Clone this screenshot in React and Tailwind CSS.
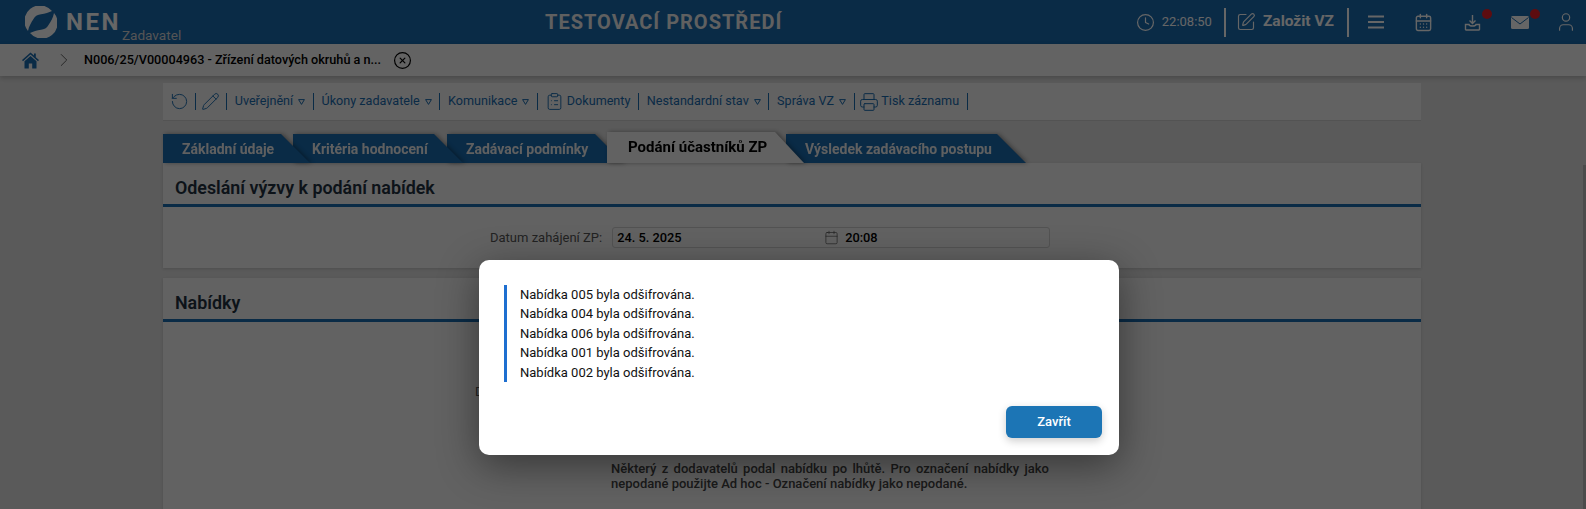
import { Clock, SquarePen, CalendarDays, User, RotateCcw, Pencil, ClipboardList, Printer, CircleX, Calendar, ChevronRight } from 'lucide-react';

const offers = ['005', '004', '006', '001', '002'];

function Sep() {
    return <span className="w-px h-[17px] bg-[#196baf]" />;
}

function Caret() {
    return (
        <svg width="7" height="6" viewBox="0 0 7 6" className="ml-[5px] mt-px">
            <path d="M0.6 0.6H6.4L3.5 5.4Z" fill="none" stroke="currentColor" strokeWidth="1" />
        </svg>
    );
}

function ToolItem({ label, caret, icon, gapClass }) {
    return (
        <>
            <span className={`flex items-center ${gapClass}`}>
                {icon}
                {label && <span>{label}</span>}
                {caret && <Caret />}
            </span>
            <Sep />
        </>
    );
}

function Tab({ label, wrapClass, widthClass, active }) {
    return (
        <div className={`relative ${wrapClass} drop-shadow-[2px_0_2px_rgba(0,0,0,0.35)]`}>
            <div className={`${widthClass} [clip-path:polygon(0_0,calc(100%-29px)_0,100%_100%,0_100%)] flex items-center font-bold ${active ? 'h-[31px] pl-[21px] text-[15px] bg-[#f5f5f5] text-black' : 'h-[29px] pl-[19px] pt-px text-[14px] bg-[#196baf] text-[#f0f0f0]'}`}>
                {label}
            </div>
        </div>
    );
}

function SectionTitle({ children }) {
    return (
        <div className="h-[44px] pl-3 pt-[9px] flex items-center border-b-[3px] border-[#196baf] text-[17.85px] font-semibold text-[#22313f]">
            {children}
        </div>
    );
}

function Logo() {
    return (
        <svg width="32" height="32" viewBox="0 0 32 32" fill="#ffffff">
            <path d="M27 5A15.5 15.5 0 0 0 3 25C4 20 6 17 8.5 13C10 10 13 8.5 16 8.3C20 8 24 6.5 27 5Z" />
            <path d="M5 27A15.5 15.5 0 0 0 29 7C28 12 26 15 23.5 19C22 22 19 23.5 16 23.7C12 24 8 25.5 5 27Z" />
        </svg>
    );
}

export default function App() {
    return (
        <div className="relative h-[509px] w-[1586px] overflow-hidden bg-[#e1e1e1] font-[Roboto,sans-serif]">
            {/* Header */}
            <div className="h-[44px] bg-[#196baf] flex items-center text-white">
                <div className="w-[545px] pl-[25px] flex items-center">
                    <Logo />
                    <span className="ml-[9px] text-[24px] font-bold tracking-[2.5px] leading-none">NEN</span>
                    <span className="ml-[1px] mt-[27px] text-[13.6px] leading-none text-[#d5d5d5]">Zadavatel</span>
                </div>
                <div className="text-[20px] font-bold tracking-[1px] text-[#f0f0f0]">TESTOVACÍ PROSTŘEDÍ</div>
                <div className="ml-auto flex items-center">
                    <Clock size={19} strokeWidth={1.5} />
                    <span className="ml-[7px] text-[13px]">22:08:50</span>
                    <span className="ml-[12px] w-[2px] h-[29px] bg-white" />
                    <SquarePen size={20} strokeWidth={1.4} className="ml-[10px]" />
                    <span className="ml-[7px] text-[15.5px] font-bold">Založit VZ</span>
                    <span className="ml-[13px] w-[2px] h-[29px] bg-white" />
                    <svg width="16" height="14" viewBox="0 0 16 14" className="ml-[19px]">
                        <path d="M0 1.5H16M0 7H16M0 12.5H16" stroke="white" strokeWidth="2" />
                    </svg>
                    <CalendarDays size={19} strokeWidth={1.8} className="ml-[30px]" />
                    <span className="relative ml-[31px]">
                        <svg width="17" height="17" viewBox="0 0 17 17" fill="none" stroke="white" strokeWidth="1.4" className="block">
                            <path d="M8.5 1V9M5.5 6.5L8.5 9.5L11.5 6.5" />
                            <path d="M5 10.5H1.5V15.5A0.8 0.8 0 0 0 2.3 16H14.7A0.8 0.8 0 0 0 15.5 15.5V10.5H12C11.5 12.5 5.5 12.5 5 10.5Z" />
                        </svg>
                        <span className="absolute -top-[5px] -right-[11px] w-[10px] h-[10px] rounded-full bg-[#e8202a]" />
                    </span>
                    <span className="relative ml-[30px]">
                        <svg width="18" height="13" viewBox="0 0 18 13" className="block">
                            <rect width="18" height="13" rx="1.5" fill="white" />
                            <path d="M0.5 1.5L9 8L17.5 1.5" fill="none" stroke="#196baf" strokeWidth="1" />
                        </svg>
                        <span className="absolute -top-[7px] -right-[11px] w-[10px] h-[10px] rounded-full bg-[#e8202a]" />
                    </span>
                    <User size={22} strokeWidth={1.3} className="ml-[26px] mr-[9px]" />
                </div>
            </div>

            {/* Breadcrumb */}
            <div className="relative h-[32px] bg-[#f8f8f8] shadow-[0_2px_5px_rgba(0,0,0,0.2)] flex items-center">
                <svg width="17" height="17" viewBox="0 0 17 17" className="ml-[22px]" fill="#196baf">
                    <path d="M8.5 0.5L0 8L1 9.2L8.5 2.6L16 9.2L17 8L13.8 5.2V1.5H12V3.6Z" />
                    <path d="M8.5 4L2.5 9.2V16.5H6.8V11.5H10.2V16.5H14.5V9.2Z" />
                </svg>
                <ChevronRight size={22} strokeWidth={1} className="ml-[14px] text-[#555555]" />
                <span className="ml-[9px] text-[12.65px] font-medium text-black">N006/25/V00004963 - Zřízení datových okruhů a n...</span>
                <CircleX size={19} strokeWidth={1.5} className="ml-[11.5px] text-black" />
            </div>

            {/* Content */}
            <div className="w-[1258px] ml-[163px]">
                <div className="mt-[7px] h-[38px] bg-[#f5f5f5] border-b border-[#d0d0d0] flex items-center gap-[7.7px] pl-[8px] text-[12.6px] text-[#196baf]">
                    <ToolItem icon={<RotateCcw size={19} strokeWidth={1.2} className="-mx-[1.5px]" />} />
                    <ToolItem icon={<Pencil size={19} strokeWidth={1.2} className="-mx-[2px]" />} />
                    <ToolItem label="Uveřejnění" caret />
                    <ToolItem label="Úkony zadavatele" caret />
                    <ToolItem label="Komunikace" caret />
                    <ToolItem label="Dokumenty" icon={<ClipboardList size={19} strokeWidth={1.2} className="-ml-[1px]" />} gapClass="gap-[3px]" />
                    <ToolItem label="Nestandardní stav" caret />
                    <ToolItem label="Správa VZ" caret />
                    <ToolItem label="Tisk záznamu" icon={<Printer size={20} strokeWidth={1.2} className="-ml-[3px]" />} gapClass="gap-[2px]" />
                </div>

                <div className="mt-[11px] h-[31px] flex items-end">
                    <Tab label="Základní údaje" wrapClass="z-40" widthClass="w-[147px]" />
                    <Tab label="Kritéria hodnocení" wrapClass="z-30 -ml-[17px]" widthClass="w-[170px]" />
                    <Tab label="Zadávací podmínky" wrapClass="z-20 -ml-[16px]" widthClass="w-[177px]" />
                    <Tab label="Podání účastníků ZP" wrapClass="z-50 -ml-[17px]" widthClass="w-[197px]" active />
                    <Tab label="Výsledek zadávacího postupu" wrapClass="z-10 -ml-[18px]" widthClass="w-[240px]" />
                </div>

                <div className="h-[105px] bg-[#f5f5f5] shadow-[0_1px_3px_rgba(0,0,0,0.15)]">
                    <SectionTitle>Odeslání výzvy k podání nabídek</SectionTitle>
                    <div className="mt-[20px] ml-[327px] flex items-center">
                        <span className="text-[13px] text-[#555555]">Datum zahájení ZP:</span>
                        <div className="ml-[10px] w-[438px] h-[21px] border border-[#cfcfcf] rounded-[3px] flex items-center pl-[4px] text-[12.8px] font-medium text-black">
                            <span className="w-[207px]">24. 5. 2025</span>
                            <Calendar size={15} strokeWidth={1} className="text-[#444444]" />
                            <span className="ml-[6px]">20:08</span>
                        </div>
                    </div>
                </div>

                <div className="mt-[10px] h-[240px] bg-[#f5f5f5] shadow-[0_1px_3px_rgba(0,0,0,0.15)]">
                    <SectionTitle>Nabídky</SectionTitle>
                    <div className="mt-[60px] ml-[312px] text-[13px] text-[#555555]">Datum otevření:</div>
                    <p className="mt-[59px] ml-[448px] w-[438px] text-[13px] leading-[15px] font-medium text-[#444444] text-justify">
                        Některý z dodavatelů podal nabídku po lhůtě. Pro označení nabídky jako nepodané použijte Ad hoc - Označení nabídky jako nepodané.
                    </p>
                </div>
            </div>

            {/* Scrollbar */}
            <div className="absolute right-0 top-[165px] bottom-0 w-[3px] bg-[#bbbbbb]" />

            {/* Overlay + dialog */}
            <div className="absolute inset-0 z-[60] bg-black/60" />
            <div className="absolute z-[70] left-[479px] top-[260px] w-[640px] h-[195px] bg-white rounded-[10px] shadow-[0_10px_40px_rgba(0,0,0,0.45)] px-[17px] py-[17px] flex flex-col">
                <div className="mt-[7.9px] ml-[8px] border-l-[3px] border-[#1e6fd0] pl-[13px] text-[13px] leading-[19.5px] text-[#111111]">
                    {offers.map(n => (
                        <div key={n}>Nabídka {n} byla odšifrována.</div>
                    ))}
                </div>
                <div className="mt-auto flex justify-end">
                    <button className="w-[96px] h-[32px] rounded-[6px] bg-[#1c75b5] text-white text-[13px] font-medium shadow-[0_3px_8px_rgba(0,0,0,0.2)]">
                        Zavřít
                    </button>
                </div>
            </div>
        </div>
    );
}
